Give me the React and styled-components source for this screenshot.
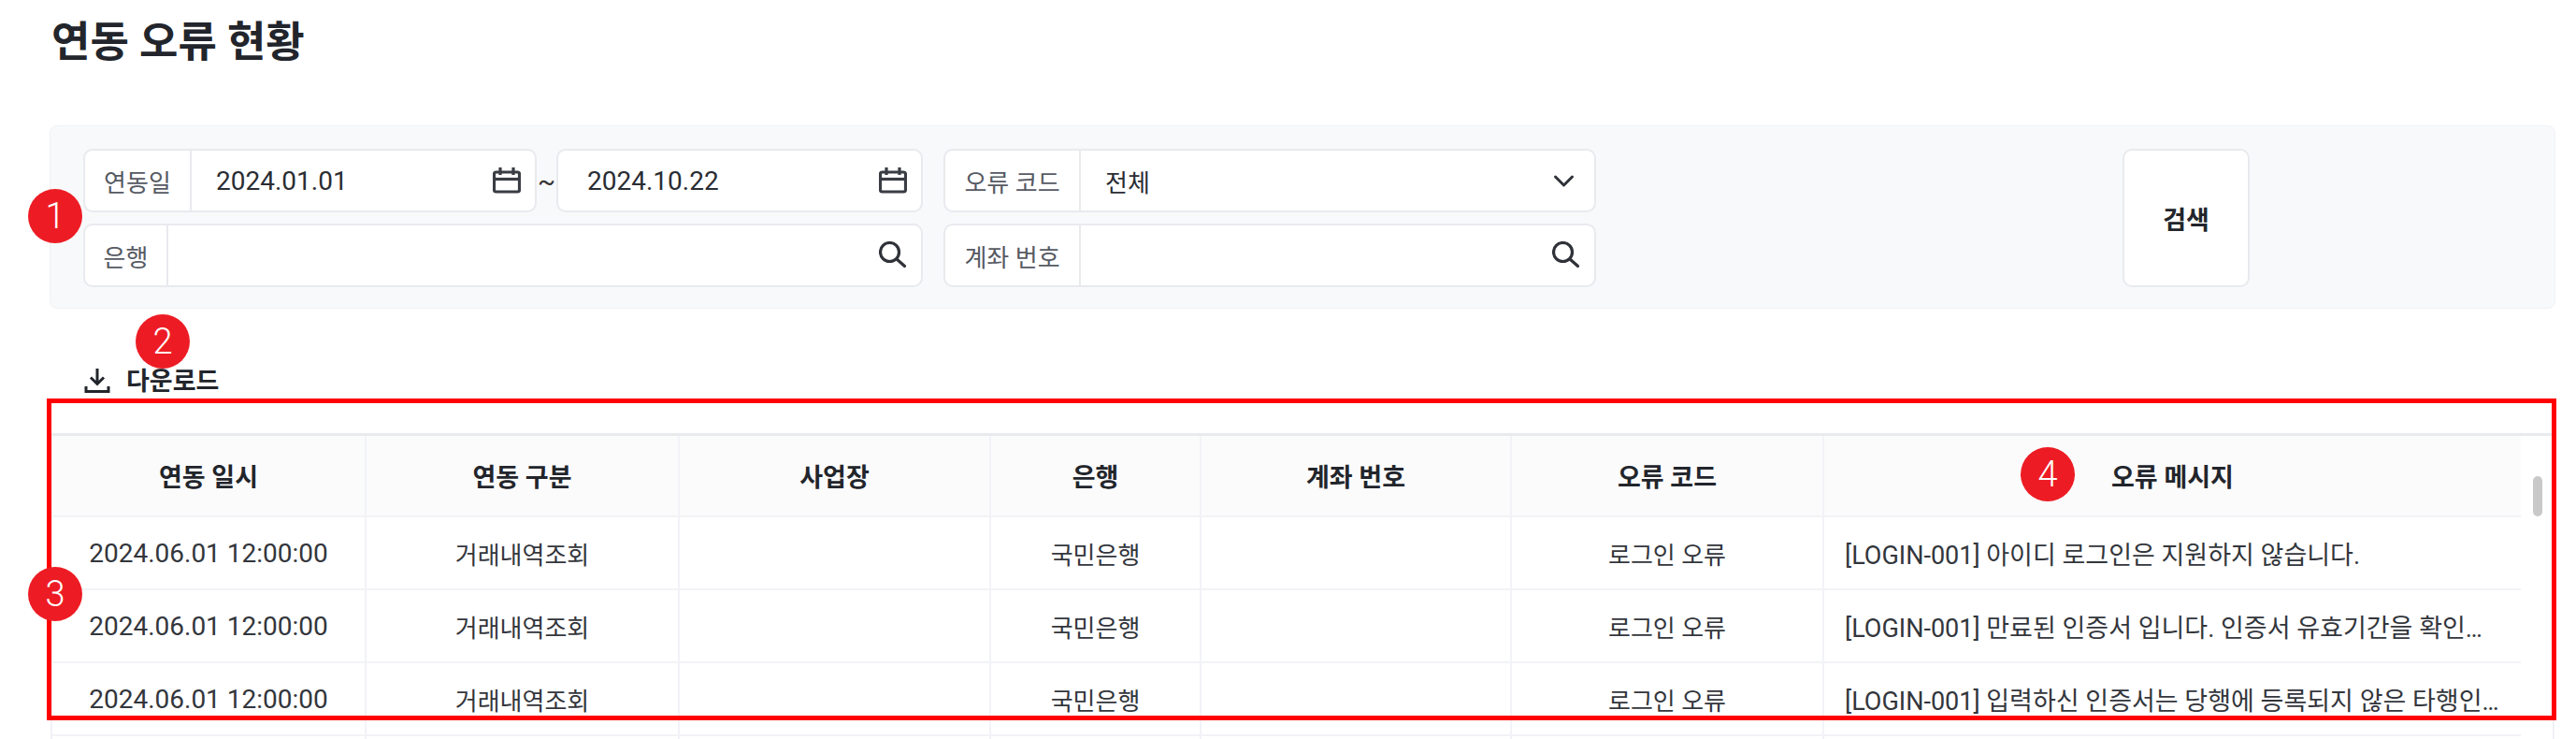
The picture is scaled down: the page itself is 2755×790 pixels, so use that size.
import React from "react";
import styled, { createGlobalStyle } from "styled-components";

const GlobalStyle = createGlobalStyle`
  html, body { margin: 0; padding: 0; background: #fff; }
  body { font-family: Roboto, "Noto Sans CJK KR", sans-serif; color: #22252b; }
`;

const Page = styled.div`
  position: relative;
  width: 2755px;
  height: 790px;
  overflow: hidden;
  background: #fff;
`;
const Title = styled.h1`
  margin: 0;
  height: 134px;
  padding: 16px 0 0 55px;
  box-sizing: border-box;
  font-size: 45px;
  line-height: 60px;
  font-weight: 700;
  color: #22252b;
`;
const FilterPanel = styled.section`
  box-sizing: border-box;
  margin-left: 53px;
  width: 2680px;
  height: 196px;
  padding: 24px 35px;
  display: flex;
  background: #f8f9fb;
  border: 1px solid #f1f2f5;
  border-radius: 8px;
`;
const FieldGrid = styled.div`
  display: grid;
  grid-template-columns: 898px 698px;
  grid-template-rows: 68px 68px;
  column-gap: 22px;
  row-gap: 12px;
`;
const DateRange = styled.div`
  display: flex;
  align-items: center;
`;
const Tilde = styled.span`
  width: 21px;
  text-align: center;
  font-size: 28px;
  color: #333;
`;
const Field = styled.div`
  box-sizing: border-box;
  display: flex;
  align-items: stretch;
  width: ${(p) => p.$width || "100%"};
  height: 68px;
  background: #fff;
  border: 2px solid #e9eaee;
  border-radius: 10px;
`;
const FieldLabel = styled.div`
  box-sizing: border-box;
  width: ${(p) => p.$width}px;
  flex: none;
  display: flex;
  align-items: center;
  justify-content: center;
  border-right: 2px solid #e9eaee;
  font-size: 26px;
  color: #565a63;
  white-space: nowrap;
`;
const FieldValue = styled.div`
  flex: 1;
  display: flex;
  align-items: center;
  justify-content: space-between;
  padding: 0 15px 0 ${(p) => p.$indent || 26}px;
  font-size: ${(p) => (p.$hangul ? 26 : 28)}px;
  color: #2a2d33;
`;
const SearchButton = styled.button`
  box-sizing: border-box;
  margin-left: 563px;
  width: 136px;
  height: 148px;
  background: #fff;
  border: 2px solid #e9eaee;
  border-radius: 10px;
  font: 700 27px Roboto, "Noto Sans CJK KR", sans-serif;
  color: #22252b;
`;
const Toolbar = styled.div`
  display: flex;
  align-items: center;
  gap: 15px;
  height: 101px;
  padding: 50px 0 0 90px;
  box-sizing: border-box;
  font-size: 27px;
  font-weight: 700;
  color: #22252b;
`;
const TableFrame = styled.div`
  box-sizing: border-box;
  display: flex;
  margin: 32px 0 0 54px;
  width: 2678px;
  border-top: 3px solid #e9eaee;
  border-left: 2px solid #f1f2f5;
  border-right: 2px solid #f1f2f5;
`;
const Table = styled.table`
  width: 2640px;
  flex: none;
  table-layout: fixed;
  border-collapse: collapse;
`;
const HeadCell = styled.th`
  box-sizing: border-box;
  height: 86px;
  padding: 0 25px;
  background: #fbfbfc;
  border-right: 2px solid #f2f3f7;
  border-bottom: 2px solid #f2f3f7;
  font-size: 27px;
  font-weight: 700;
  color: #22252b;
  &:last-child { border-right: 0; }
`;
const Cell = styled.td`
  box-sizing: border-box;
  height: 78px;
  padding: ${(p) => (p.$left ? "0 20px 0 22px" : "0 10px")};
  border-right: 2px solid #f2f3f7;
  border-bottom: 2px solid #f2f3f7;
  text-align: ${(p) => (p.$left ? "left" : "center")};
  font-size: ${(p) => p.$size || 26}px;
  color: #33363c;
  white-space: nowrap;
  overflow: hidden;
  text-overflow: ellipsis;
  &:last-child { border-right: 0; }
`;
const ScrollRail = styled.div`
  flex: 1;
  padding: 43px 0 0 13px;
`;
const ScrollThumb = styled.div`
  width: 10px;
  height: 43px;
  border-radius: 5px;
  background: #c9c9c9;
`;
const Marker = styled.div`
  position: absolute;
  left: ${(p) => p.$x - 29}px;
  top: ${(p) => p.$y - 29}px;
  width: 58px;
  height: 58px;
  border-radius: 50%;
  background: #ed1c24;
  color: #fff;
  display: flex;
  align-items: center;
  justify-content: center;
  font: 300 38px Roboto, sans-serif;
`;
const Highlight = styled.div`
  position: absolute;
  left: 50px;
  top: 426px;
  width: 2684px;
  height: 344px;
  box-sizing: border-box;
  border: 5px solid #ff0000;
  pointer-events: none;
`;

const CalendarIcon = () => (
  <svg width="30" height="30" viewBox="0 0 30 30" fill="none" stroke="#3a3d44" strokeWidth="3.2">
    <rect x="1.5" y="6" width="27" height="21" rx="2" />
    <path d="M1.5 13.5h27" />
    <path d="M8 1v8M22 1v8" />
  </svg>
);
const SearchIcon = () => (
  <svg width="30" height="30" viewBox="0 0 30 30" fill="none" stroke="#2f3238" strokeWidth="3.2">
    <circle cx="11.5" cy="11.5" r="10" />
    <path d="M19 19l8.5 7.5" strokeLinecap="round" />
  </svg>
);
const ChevronIcon = () => (
  <svg width="30" height="30" viewBox="0 0 30 30" fill="none" stroke="#2f3238" strokeWidth="3" strokeLinecap="round" strokeLinejoin="round">
    <path d="M3.5 11l9 9 9-9" />
  </svg>
);
const DownloadIcon = () => (
  <svg width="30" height="30" viewBox="0 0 30 30" fill="none" stroke="#22252b" strokeWidth="3">
    <path d="M14 3v16M7 12.5l7 7 7-7" />
    <path d="M2 22v5.5h24V22" />
  </svg>
);

const widths = [335, 335, 333, 225, 332, 334, 746];
const heads = ["연동 일시", "연동 구분", "사업장", "은행", "계좌 번호", "오류 코드", "오류 메시지"];
const messages = [
  "[LOGIN-001] 아이디 로그인은 지원하지 않습니다.",
  "[LOGIN-001] 만료된 인증서 입니다. 인증서 유효기간을 확인해 주시기 바랍니다.",
  "[LOGIN-001] 입력하신 인증서는 당행에 등록되지 않은 타행인증서 입니다.",
];

export default function App() {
  return (
    <Page>
      <GlobalStyle />
      <Title>연동 오류 현황</Title>
      <FilterPanel>
        <FieldGrid>
          <DateRange>
            <Field $width="485px">
              <FieldLabel $width={114}>연동일</FieldLabel>
              <FieldValue>
                2024.01.01
                <CalendarIcon />
              </FieldValue>
            </Field>
            <Tilde>~</Tilde>
            <Field $width="392px">
              <FieldValue $indent={31}>
                2024.10.22
                <CalendarIcon />
              </FieldValue>
            </Field>
          </DateRange>
          <Field>
            <FieldLabel $width={145}>오류 코드</FieldLabel>
            <FieldValue $hangul>
              전체
              <ChevronIcon />
            </FieldValue>
          </Field>
          <Field>
            <FieldLabel $width={89}>은행</FieldLabel>
            <FieldValue>
              <span />
              <SearchIcon />
            </FieldValue>
          </Field>
          <Field>
            <FieldLabel $width={145}>계좌 번호</FieldLabel>
            <FieldValue>
              <span />
              <SearchIcon />
            </FieldValue>
          </Field>
        </FieldGrid>
        <SearchButton>검색</SearchButton>
      </FilterPanel>
      <Toolbar>
        <DownloadIcon />
        다운로드
      </Toolbar>
      <TableFrame>
        <Table>
          <colgroup>
            {widths.map((w, i) => (
              <col key={i} width={w} />
            ))}
          </colgroup>
          <thead>
            <tr>
              {heads.map((h) => (
                <HeadCell key={h}>{h}</HeadCell>
              ))}
            </tr>
          </thead>
          <tbody>
            {messages.map((m, i) => (
              <tr key={i}>
                <Cell $size={28}>2024.06.01 12:00:00</Cell>
                <Cell>거래내역조회</Cell>
                <Cell />
                <Cell>국민은행</Cell>
                <Cell />
                <Cell>로그인 오류</Cell>
                <Cell $left $size={27}>{m}</Cell>
              </tr>
            ))}
            <tr>
              {widths.map((w) => (
                <Cell key={w} />
              ))}
            </tr>
          </tbody>
        </Table>
        <ScrollRail>
          <ScrollThumb />
        </ScrollRail>
      </TableFrame>
      <Highlight />
      <Marker $x={59} $y={231}>1</Marker>
      <Marker $x={174} $y={365}>2</Marker>
      <Marker $x={59} $y={635}>3</Marker>
      <Marker $x={2190} $y={507}>4</Marker>
    </Page>
  );
}
